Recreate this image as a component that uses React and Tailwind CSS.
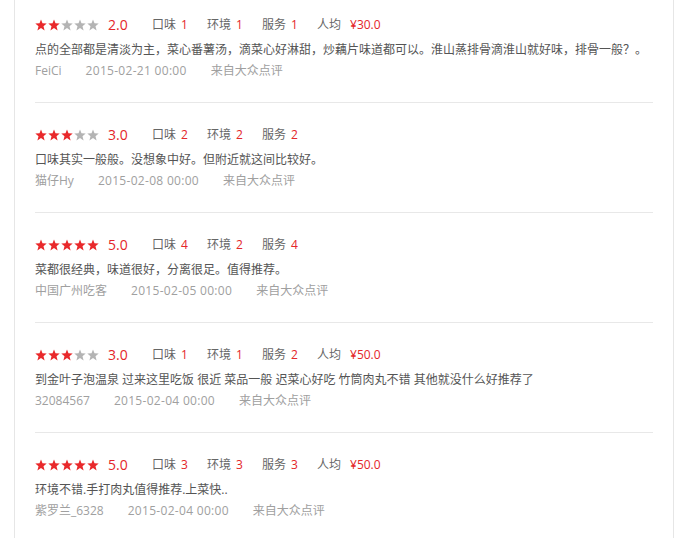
const reviews = [
  {
    score: 2,
    taste: 1,
    env: 1,
    service: 1,
    price: '¥30.0',
    text: '点的全部都是清淡为主，菜心番薯汤，滴菜心好淋甜，炒藕片味道都可以。淮山蒸排骨滴淮山就好味，排骨一般？。',
    user: 'FeiCi',
    time: '2015-02-21 00:00',
  },
  {
    score: 3,
    taste: 2,
    env: 2,
    service: 2,
    text: '口味其实一般般。没想象中好。但附近就这间比较好。',
    user: '猫仔Hy',
    time: '2015-02-08 00:00',
  },
  {
    score: 5,
    taste: 4,
    env: 2,
    service: 4,
    text: '菜都很经典，味道很好，分离很足。值得推荐。',
    user: '中国广州吃客',
    time: '2015-02-05 00:00',
  },
  {
    score: 3,
    taste: 1,
    env: 1,
    service: 2,
    price: '¥50.0',
    text: '到金叶子泡温泉 过来这里吃饭 很近 菜品一般 迟菜心好吃 竹筒肉丸不错 其他就没什么好推荐了',
    user: '32084567',
    time: '2015-02-04 00:00',
  },
  {
    score: 5,
    taste: 3,
    env: 3,
    service: 3,
    price: '¥50.0',
    text: '环境不错.手打肉丸值得推荐.上菜快..',
    user: '紫罗兰_6328',
    time: '2015-02-04 00:00',
  },
];

// 5각 별
function Star({ on }) {
  return (
    <svg width="12" height="12" viewBox="0 0 12 12" className="block">
      <polygon
        points="6,0.4 7.5,4.3 11.7,4.5 8.5,7.2 9.6,11.4 6,9.1 2.4,11.4 3.5,7.2 0.3,4.5 4.5,4.3"
        fill={on ? '#e9292b' : '#b4b4b4'}
      />
    </svg>
  );
}

function Metric({ label, value }) {
  return (
    <span className="flex w-[55px] shrink-0 items-center">
      <span className="text-[#666]">{label}</span>
      <span className="ml-[5px] text-[#e4262a]">{value}</span>
    </span>
  );
}

function Review({ r, first }) {
  return (
    <div className={`${first ? 'pt-[11px]' : 'pt-[18px]'} border-b border-[#e8e8e8] pb-[21px]`}>
      <div className="flex h-[28px] items-center text-[12px]">
        <div className="flex gap-px">
          {[0, 1, 2, 3, 4].map((i) => (
            <Star key={i} on={i < r.score} />
          ))}
        </div>
        <span className="ml-[9px] w-[44px] text-[14px] leading-none text-[#e4262a]">{r.score}.0</span>
        <Metric label="口味" value={r.taste} />
        <Metric label="环境" value={r.env} />
        <Metric label="服务" value={r.service} />
        {r.price && (
          <span className="flex items-center">
            <span className="text-[#666]">人均</span>
            <span className="ml-[9px] text-[#e4262a]">{r.price}</span>
          </span>
        )}
      </div>
      <p className="text-[12px] leading-[22px] text-[#555]">{r.text}</p>
      <div className="flex gap-6 text-[12px] leading-[20px] text-[#a0a0a0]">
        <span>{r.user}</span>
        <span className="tracking-[0.3px]">{r.time}</span>
        <span>来自大众点评</span>
      </div>
    </div>
  );
}

export default function App() {
  return (
    <div
      className="h-[538px] w-[689px] overflow-hidden bg-white"
      style={{ fontFamily: '"Open Sans", "Noto Sans CJK SC", sans-serif' }}
    >
      <div className="ml-[14px] h-full w-[660px] border-x border-[#e6e6e6] px-5">
        {reviews.map((r, i) => (
          <Review key={i} r={r} first={i === 0} />
        ))}
      </div>
    </div>
  );
}
